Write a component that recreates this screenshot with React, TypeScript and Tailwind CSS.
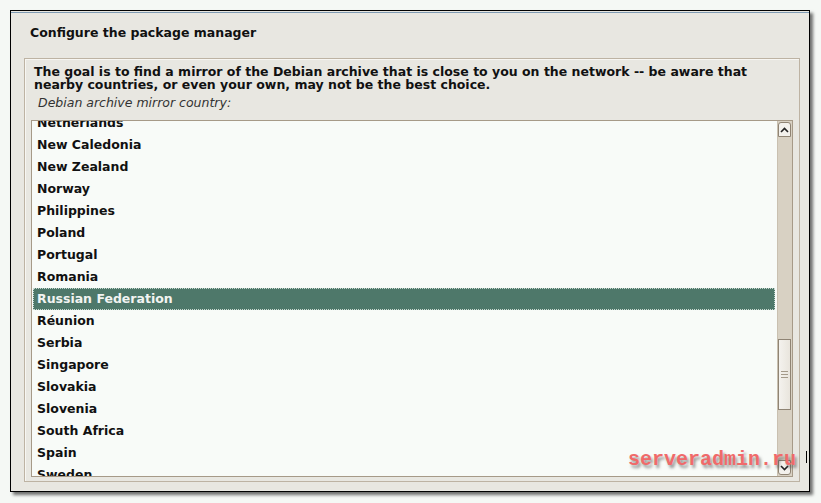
import React from "react";

const countries = [
  "Netherlands",
  "New Caledonia",
  "New Zealand",
  "Norway",
  "Philippines",
  "Poland",
  "Portugal",
  "Romania",
  "Russian Federation",
  "Réunion",
  "Serbia",
  "Singapore",
  "Slovakia",
  "Slovenia",
  "South Africa",
  "Spain",
  "Sweden",
];

const selected = "Russian Federation";

function ArrowUp() {
  return (
    <svg width="9" height="6" viewBox="0 0 9 6">
      <path d="M1 5 L4.5 1.5 L8 5" fill="none" stroke="#222" strokeWidth="1.6" />
    </svg>
  );
}

function ArrowDown() {
  return (
    <svg width="9" height="6" viewBox="0 0 9 6">
      <path d="M1 1 L4.5 4.5 L8 1" fill="none" stroke="#222" strokeWidth="1.6" />
    </svg>
  );
}

function Scrollbar() {
  return (
    <div className="w-[15px] flex flex-col bg-[#d8d1c3] border-l border-[#c9c0b0]">
      <div className="h-[15px] mt-px mr-px rounded-t-[3px] bg-[#f3f1ec] border border-[#8f8474] flex items-center justify-center">
        <ArrowUp />
      </div>
      <div className="h-[202px]" />
      <div className="h-[71px] mr-px bg-gradient-to-r from-[#f4f2ee] to-[#e9e5dd] border border-[#8f8474] flex flex-col items-center justify-center gap-[2px]">
        <div className="w-[7px] h-px bg-[#a49a8a]" />
        <div className="w-[7px] h-px bg-[#a49a8a]" />
        <div className="w-[7px] h-px bg-[#a49a8a]" />
      </div>
      <div className="flex-1" />
      <div className="h-[15px] mb-px mr-px rounded-b-[3px] bg-[#f3f1ec] border border-[#8f8474] flex items-center justify-center">
        <ArrowDown />
      </div>
    </div>
  );
}

export default function App() {
  return (
    <div
      className="relative w-[821px] h-[503px] bg-[#f5f8f5] pt-[10px] pl-[10px] overflow-hidden"
      style={{ fontFamily: '"DejaVu Sans", Verdana, sans-serif' }}
    >
      <div className="w-[800px] h-[482px] border border-black bg-[#e8e7e1] shadow-[3px_3px_3px_rgba(0,0,0,0.55)] flex flex-col">
        <div className="h-px mt-px bg-[#7f9bb3]" />
        <div className="pl-[19px] pt-[12px] h-[45px] text-[12.5px] leading-[16px] font-bold text-[#111]">
          Configure the package manager
        </div>
        <div className="ml-[13px] mr-[9px] h-[424px] border border-[#bdb3a3] shadow-[inset_1px_1px_0_#f7f6f2] flex flex-col">
          <div className="pl-[9px] pt-[6px] text-[12.5px] leading-[13px] font-bold text-[#111]">
            The goal is to find a mirror of the Debian archive that is close to you on the network -- be aware that
            <br />
            nearby countries, or even your own, may not be the best choice.
          </div>
          <div className="pl-[13px] mt-[5px] h-[24px] text-[12.5px] leading-[14px] italic text-[#333]">
            Debian archive mirror country:
          </div>
          <div className="ml-[6px] mr-[6px] h-[357px] border border-[#a69a88] bg-[#f8fbf8] flex">
            <div className="flex-1 overflow-hidden pl-px pr-[2px]">
              <div className="-mt-[9px] flex flex-col">
                {countries.map((c) =>
                  c === selected ? (
                    <div
                      key={c}
                      className="h-[22px] flex items-center pl-[3px] bg-[#4e786a] border border-dotted border-[#c8d8d0] text-[12.5px] font-bold text-[#f2f4f2]"
                    >
                      {c}
                    </div>
                  ) : (
                    <div key={c} className="h-[22px] flex items-center pl-[4px] text-[12.5px] font-bold text-[#111]">
                      {c}
                    </div>
                  )
                )}
              </div>
            </div>
            <Scrollbar />
          </div>
        </div>
      </div>
      <div className="absolute left-[806px] top-[451px] w-px h-[12px] bg-black" />
      <div
        className="absolute left-[628px] top-[446px] text-[20px] leading-[28px] font-bold text-[#f06a6a] [text-shadow:2px_3px_3px_rgba(80,80,80,0.6)]"
        style={{ fontFamily: '"Liberation Mono", "DejaVu Sans Mono", monospace' }}
      >
        serveradmin.ru
      </div>
    </div>
  );
}
